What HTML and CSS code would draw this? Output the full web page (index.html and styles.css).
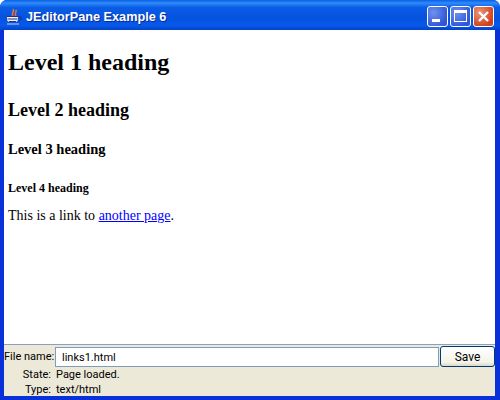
FILE: index.html
```html
<!DOCTYPE html>
<html lang="en">
<head>
    <meta charset="UTF-8">
    <title>JEditorPane Example 6</title>
    <link rel="stylesheet" href="styles.css">
</head>
<body>
    <div class="window">
        <div class="titlebar">
            <svg class="app-icon" width="16" height="16" viewBox="0 0 16 16">
                <path d="M7 0c2 2-2 4 0 7M10 1c1 2-2 3 0 6" fill="none" stroke="#e8703a" stroke-width="1.600"/>
                <path d="M1 7h11v3c0 2-1 3-3 3H4c-2 0-3-1-3-3z" fill="#eef0fa"/>
                <path d="M1 7.500h11M1.500 10h10M3 12.500h7" stroke="#26307e"/>
                <path d="M12 8h3v2.500L12 12" fill="none" stroke="#26307e"/>
                <path d="M1 15h12" stroke="#c8d0ee"/>
            </svg>
            <span class="title">JEditorPane Example 6</span>
            <div class="win-buttons">
                <div class="win-btn"><span class="min-mark"></span></div>
                <div class="win-btn"><span class="max-mark"></span></div>
                <div class="win-btn close-btn">
                    <svg width="13" height="13" viewBox="0 0 13 13"><path d="M2 2l9 9M11 2l-9 9" stroke="#fff" stroke-width="2.400"/></svg>
                </div>
            </div>
        </div>
        <div class="client">
            <div class="editor">
                <h1>Level 1 heading</h1>
                <h2>Level 2 heading</h2>
                <h3>Level 3 heading</h3>
                <h4>Level 4 heading</h4>
                <p>This is a link to <a href="#">another page</a>.</p>
            </div>
            <div class="bottom">
                <div class="file-row">
                    <label class="file-label">File name:</label>
                    <div class="file-input">links1.html</div>
                    <button class="save-btn">Save</button>
                </div>
                <div class="info-row"><span class="info-key">State:</span><span>Page loaded.</span></div>
                <div class="info-row"><span class="info-key">Type:</span><span>text/html</span></div>
            </div>
        </div>
    </div>
</body>
</html>
```

FILE: styles.css
```css
/* Reset */
*{margin:0;padding:0;box-sizing:border-box}
html,body{width:500px;height:400px;overflow:hidden}
body{font-family:Roboto,"Liberation Sans",Arial,sans-serif}
/* Window frame */
.window{width:500px;height:400px;display:flex;flex-direction:column;background:#0831d9;border-radius:7px 7px 0 0;overflow:hidden}
.titlebar{height:30px;flex:none;display:flex;align-items:center;padding:3px 6px 0 6px;background:linear-gradient(180deg,#0a5fe8 0%,#2f8cf8 10%,#0a5ce6 25%,#0553de 60%,#0659ea 85%,#0342c8 100%)}
.app-icon{flex:none;margin-right:4px}
.title{color:#fff;font-family:"Liberation Sans",Arial,sans-serif;font-size:12.700px;font-weight:bold;text-shadow:1px 1px 0 #0a2a90;white-space:nowrap;flex:1}
.win-buttons{display:flex;gap:2px}
.win-btn{width:21px;height:21px;border:1px solid #fff;border-radius:3px;background:radial-gradient(circle at 30% 30%,#6f92ee,#2f55d8 75%);display:flex}
.min-mark{width:8px;height:3px;background:#fff;margin:12px 0 0 4px}
.max-mark{width:13px;height:12px;border:1px solid #fff;border-top-width:3px;margin:3px 0 0 3px}
.close-btn{background:radial-gradient(circle at 30% 30%,#ee9478,#d0401c 75%);align-items:center;justify-content:center}
/* Client area */
.client{flex:1;margin:0 5px 4px 4px;display:flex;flex-direction:column;min-height:0;background:#ece9d8}
.editor{flex:1;background:#fff;padding:0 4px;font-family:"Liberation Serif","Times New Roman",serif;color:#000;border-bottom:1px solid #8aa0c0;min-height:0}
.editor h1{font-size:24px;line-height:28px;margin-top:18px}
.editor h2{font-size:18px;line-height:21px;margin-top:24px}
.editor h3{font-size:14.500px;line-height:16px;margin-top:20px}
.editor h4{font-size:12px;line-height:14px;margin-top:24px}
.editor p{font-size:14px;line-height:16px;margin-top:13px}
.editor a{color:#00f}
/* Bottom panel */
.bottom{flex:none;height:51px;font-size:11px;color:#000;padding-top:1px}
.file-row{display:flex;align-items:center;height:21px}
.file-label{width:47px;flex:none;text-align:right;white-space:nowrap}
.file-input{flex:1;height:20px;margin-left:4px;border:1px solid #7f9db9;background:#fff;padding:2px 0 0 6px;line-height:15px}
.save-btn{width:55px;height:21px;flex:none;margin-left:1px;font:12px Roboto,"Liberation Sans",Arial,sans-serif;border:1px solid #003c74;border-radius:3px;background:linear-gradient(180deg,#fff,#f4f3ea 80%,#dcd8c8)}
.info-row{display:flex;height:15px;line-height:15px}
.info-key{width:47px;flex:none;text-align:right;margin-right:5px}
```
